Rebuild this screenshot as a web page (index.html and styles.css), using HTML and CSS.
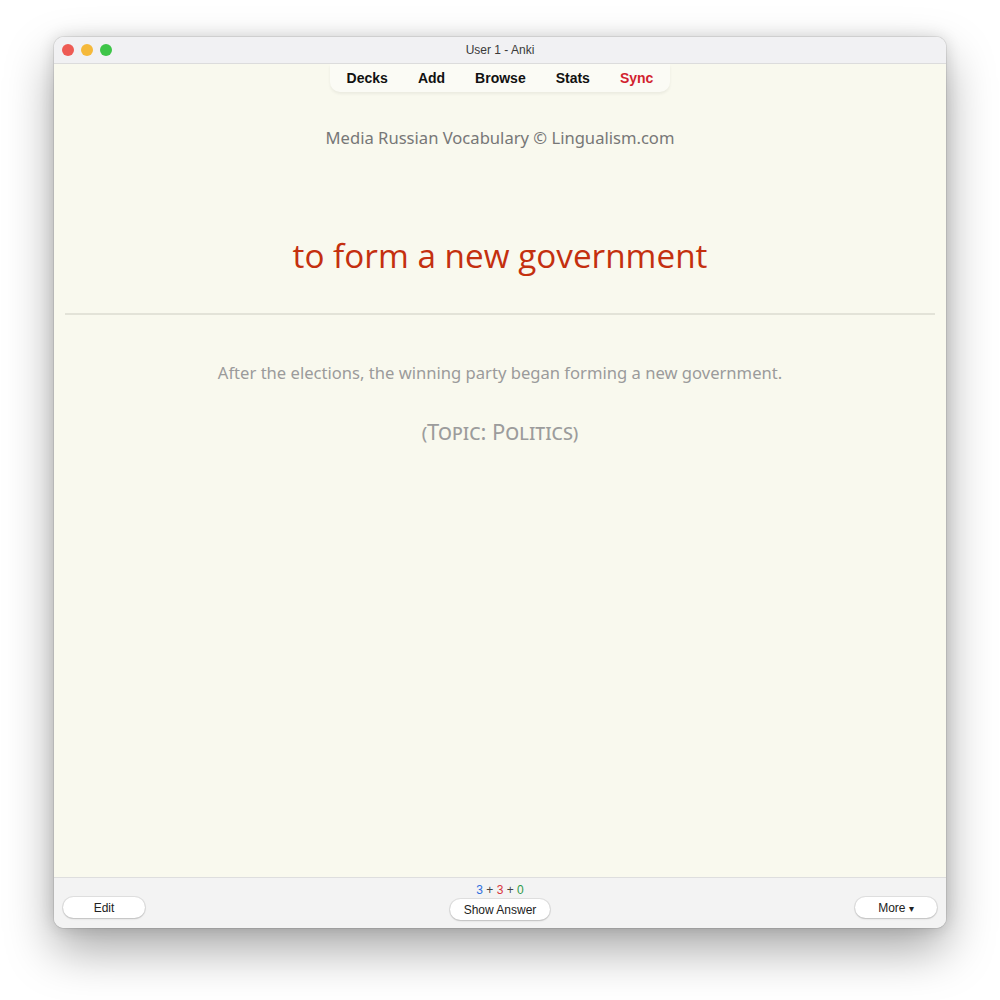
FILE: index.html
```html
<!DOCTYPE html>
<html lang="en">
<head>
  <meta charset="UTF-8" />
  <meta name="viewport" content="width=device-width, initial-scale=1" />
  <title>User 1 - Anki</title>
  <link rel="stylesheet" href="styles.css">
</head>
<body>

  <div class="window">
    <!-- Title bar -->
    <div class="titlebar">
      <div class="lights">
        <span class="light red"></span>
        <span class="light yellow"></span>
        <span class="light green"></span>
      </div>
      <div class="title">User 1 - Anki</div>
    </div>

    <!-- Card area -->
    <div class="content">
      <nav class="toolbar">
        <a href="#">Decks</a>
        <a href="#">Add</a>
        <a href="#">Browse</a>
        <a href="#">Stats</a>
        <a href="#" class="sync">Sync</a>
      </nav>

      <div class="deck-name">Media Russian Vocabulary © Lingualism.com</div>
      <div class="front">to form a new government</div>
      <hr class="answer-line" />
      <div class="example">After the elections, the winning party began forming a new government.</div>
      <div class="topic">(Topic: Politics)</div>
    </div>

    <!-- Bottom bar -->
    <div class="bottombar">
      <div class="side left">
        <button class="btn">Edit</button>
      </div>
      <div class="middle">
        <div class="counts">
          <span class="new">3</span> + <span class="learn">3</span> + <span class="review">0</span>
        </div>
        <button class="btn answer">Show Answer</button>
      </div>
      <div class="side right">
        <button class="btn">More <span class="caret">▾</span></button>
      </div>
    </div>
  </div>

</body>
</html>
```

FILE: styles.css
```css
* {
  box-sizing: border-box;
}
html, body {
  height: 100%;
}
body {
  margin: 0;
  padding: 37px 0 0 54px;
  background: #ffffff;
  font-family: 'Liberation Sans', Arial, sans-serif;
  overflow: hidden;
}
.window {
  width: 892px;
  border-radius: 10px;
  overflow: hidden;
  box-shadow: 0 22px 48px rgba(0, 0, 0, 0.34), 0 0 16px rgba(0, 0, 0, 0.14), 0 0 0 1px rgba(0, 0, 0, 0.08);
  display: flex;
  flex-direction: column;
}
.titlebar {
  height: 27px;
  background: #f1f1f3;
  border-bottom: 1px solid #dcdcdc;
  display: flex;
  align-items: center;
  position: relative;
}
.lights {
  display: flex;
  gap: 7px;
  padding-left: 8px;
}
.light {
  width: 12px;
  height: 12px;
  border-radius: 50%;
}
.light.red { background: #ee5b54; }
.light.yellow { background: #f5b93a; }
.light.green { background: #3ec548; }
.title {
  position: absolute;
  left: 0;
  right: 0;
  text-align: center;
  font-size: 12px;
  color: #3a3a3a;
}
.content {
  height: 813px;
  background: #f9f9ee;
  display: flex;
  flex-direction: column;
  align-items: center;
}
.toolbar {
  display: flex;
  gap: 30px;
  padding: 6px 17px 0;
  height: 28px;
  background: #fbfbf5;
  border-radius: 0 0 10px 10px;
  box-shadow: 0 2px 3px rgba(0, 0, 0, 0.06);
}
.toolbar a {
  font-size: 14px;
  font-weight: bold;
  color: #111;
  text-decoration: none;
}
.toolbar a.sync {
  color: #d21f2f;
}
.deck-name {
  margin-top: 34px;
  font-family: 'Noto Sans', sans-serif;
  font-size: 16.6px;
  color: #777;
}
.front {
  margin-top: 83px;
  font-family: 'Open Sans', sans-serif;
  font-size: 33.3px;
  color: #c4300f;
}
.answer-line {
  align-self: stretch;
  margin: 35px 11px 0;
  border: none;
  border-top: 2px solid #e3e3d8;
}
.example {
  margin-top: 46px;
  font-family: 'Noto Sans', sans-serif;
  font-size: 16.6px;
  color: #9b9b9b;
}
.topic {
  margin-top: 32px;
  font-family: 'Noto Sans', sans-serif;
  font-size: 22px;
  font-variant: small-caps;
  color: #9c9c9c;
}
.bottombar {
  height: 51px;
  background: #f3f3f3;
  border-top: 1px solid #dedede;
  display: grid;
  grid-template-columns: 1fr auto 1fr;
  align-items: end;
  padding: 0 9px 10px;
}
.side.right {
  text-align: right;
}
.middle {
  display: flex;
  flex-direction: column;
  align-items: center;
  margin-bottom: -2px;
}
.counts {
  font-size: 12px;
  color: #444;
  margin-bottom: 2px;
}
.counts .new { color: #2f6fe0; }
.counts .learn { color: #d9363e; }
.counts .review { color: #2f9a48; }
.btn {
  width: 82px;
  height: 21px;
  border: none;
  border-radius: 11px;
  background: #ffffff;
  box-shadow: 0 0 0 1px rgba(0, 0, 0, 0.08), 0 1px 2px rgba(0, 0, 0, 0.15);
  font-family: 'Liberation Sans', Arial, sans-serif;
  font-size: 12px;
  color: #222;
  padding: 0;
}
.btn.answer {
  width: 100px;
}
.caret {
  font-size: 10px;
}
```
